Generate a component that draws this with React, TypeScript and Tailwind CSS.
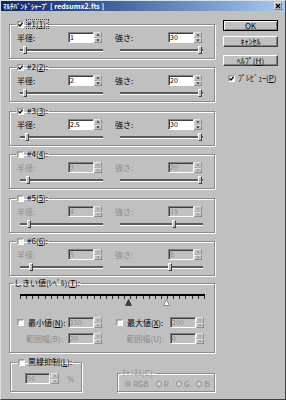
import React from "react";

type Band = {
	n: number;
	on: boolean;
	r: string;
	s: string;
	rx: number;
	sx: number;
	dis: boolean;
	focus?: boolean;
};

const bands: Band[] = [
	{ n: 1, on: true, r: "1", s: "30", rx: 3, sx: 78, dis: false, focus: true },
	{ n: 2, on: true, r: "2", s: "20", rx: 3, sx: 78, dis: false },
	{ n: 3, on: true, r: "2.5", s: "30", rx: 5, sx: 78, dis: false },
	{ n: 4, on: false, r: "3", s: "20", rx: 6, sx: 78, dis: true },
	{ n: 5, on: false, r: "4", s: "15", rx: 7, sx: 52, dis: true },
	{ n: 6, on: false, r: "5", s: "8", rx: 9, sx: 48, dis: true },
];

const gaps = ["", "mt-[4px]", "mt-[5px]", "mt-[4px]", "mt-[5px]", "mt-[4px]"];

const grey = "text-[#8c8c8c]";
const frame =
	"border border-[#8a8a8a] shadow-[inset_1px_1px_0_#fff,1px_1px_0_#fff]";

const Check = ({ on }: { on?: boolean }) => (
	<svg width="7" height="7" viewBox="0 0 7 7" className="shrink-0">
		<rect width="7" height="7" fill="#fff" />
		<path d="M0 7V0h7" fill="none" stroke="#808080" strokeWidth="1" />
		<path d="M1 6V1h5" fill="none" stroke="#404040" strokeWidth="0.6" />
		{on && (
			<path
				d="M1.6 3.4 L3 4.9 L5.6 1.8"
				fill="none"
				stroke="#000"
				strokeWidth="1.3"
			/>
		)}
	</svg>
);

const Spin = ({ dis }: { dis?: boolean }) => {
	const c = dis ? "#8c8c8c" : "#000";
	return (
		<svg width="8" height="11" viewBox="0 0 8 11" className="shrink-0">
			<rect width="8" height="11" fill="#c0c0c0" />
			<path d="M0 5V0h8" fill="none" stroke="#fff" />
			<path d="M8 0v5.5H0" fill="none" stroke="#606060" />
			<path d="M0 11V6h8" fill="none" stroke="#fff" />
			<path d="M8 6v5H0" fill="none" stroke="#606060" />
			<path d="M2.5 3.6h3L4 2z" fill={c} />
			<path d="M2.5 7.6h3L4 9.2z" fill={c} />
		</svg>
	);
};

const Field = ({ v, dis, w = "w-[26px]" }: { v: string; dis?: boolean; w?: string }) => (
	<span
		className={`flex h-[11px] ${w} shrink-0 items-center border border-t-[#808080] border-l-[#808080] border-r-white border-b-white pl-[1px] text-[7px] shadow-[inset_1px_1px_0_#404040] ${
			dis ? `bg-[#c0c0c0] ${grey}` : "bg-white"
		}`}
	>
		{v}
	</span>
);

const Track = ({ x }: { x: number }) => (
	<div className="relative flex h-[8px] w-[83px] items-center">
		<div className="h-[2px] w-full bg-[#5a5a5a] shadow-[0_1px_0_#fff]" />
		<div
			className="absolute top-0 h-[8px] w-[4px] border border-t-white border-l-white border-r-[#404040] border-b-[#404040] bg-[#c0c0c0]"
			style={{ left: x }}
		/>
	</div>
);

const Btn = ({ children, def, cls = "" }: { children: React.ReactNode; def?: boolean; cls?: string }) => (
	<button
		type="button"
		className={`flex h-[11px] w-[55px] items-center justify-center bg-[#c0c0c0] ${
			def
				? "border border-black shadow-[inset_1px_1px_0_#fff,inset_-1px_-1px_0_#808080]"
				: "border border-t-white border-l-white border-r-[#404040] border-b-[#404040] shadow-[inset_-1px_-1px_0_#808080]"
		} ${cls}`}
	>
		{children}
	</button>
);

const Radio = ({ on, label }: { on?: boolean; label: string }) => (
	<span className={`flex items-center gap-[2px] ${grey}`}>
		<svg width="6" height="6" viewBox="0 0 6 6">
			<circle cx="3" cy="3" r="2.6" fill="#d4d4d4" stroke="#808080" strokeWidth="0.8" />
			{on && <circle cx="3" cy="3" r="1.1" fill="#6a6a6a" />}
		</svg>
		{label}
	</span>
);

const BandGroup = ({ b, cls }: { b: Band; cls: string }) => (
	<fieldset className={`h-[39px] ${frame} ${cls}`}>
		<legend className="ml-[6px] flex h-[8px] items-center gap-[3px] px-[1px]">
			<Check on={b.on} />
			<span className={b.focus ? "outline outline-1 outline-dotted outline-[#404040]" : ""}>
				#{b.n}(<span className="underline">{b.n}</span>):
			</span>
		</legend>
		<div className={`mt-[4px] flex h-[11px] items-center pl-[7px] ${b.dis ? grey : ""}`}>
			<span className="w-[51px]">半径:</span>
			<Field v={b.r} dis={b.dis} />
			<Spin dis={b.dis} />
			<span className="ml-[13px] w-[53px]">強さ:</span>
			<Field v={b.s} dis={b.dis} />
			<Spin dis={b.dis} />
		</div>
		<div className="mt-[3px] flex h-[8px] items-center gap-[17px] pl-[10px]">
			<Track x={b.rx} />
			<Track x={b.sx} />
		</div>
	</fieldset>
);

export default function App() {
	const ticks = Array.from({ length: 31 });
	return (
		<div className="flex h-[400px] w-[286px] flex-col border border-t-[#dfdfdf] border-l-[#dfdfdf] border-r-[#404040] border-b-[#404040] bg-[#c0c0c0] font-['Noto_Sans_CJK_JP','Noto_Sans',sans-serif] text-[8px] leading-none text-black">
			{/* title bar */}
			<div className="flex h-[10px] shrink-0 items-center justify-between bg-linear-to-r from-[#0a246a] to-[#a6caf0] pl-[2px] pr-[3px] text-[7px] font-bold text-white">
				<span>ﾏﾙﾁﾊﾞﾝﾄﾞｼｬｰﾌﾟ [ redsumx2.fts ]</span>
				<svg width="8" height="8" viewBox="0 0 8 8">
					<rect width="8" height="8" fill="#c0c0c0" />
					<path d="M0 8V0h8" fill="none" stroke="#fff" />
					<path d="M8 0v8H0" fill="none" stroke="#404040" />
					<path d="M2 2l4 4M6 2l-4 4" stroke="#000" strokeWidth="1.2" />
				</svg>
			</div>

			<div className="flex">
				{/* left column */}
				<div className="flex w-[214px] flex-col pl-[8px] pt-[9px]">
					{bands.map((b, i) => (
						<BandGroup key={b.n} b={b} cls={gaps[i]} />
					))}

					{/* threshold */}
					<fieldset className={`mt-[3px] h-[74px] ${frame}`}>
						<legend className="ml-[3px] flex h-[8px] items-center px-[1px]">
							しきい値(ﾚﾍﾞﾙ)(<span className="underline">T</span>):
						</legend>
						<div className="relative mt-[7px] ml-[10px] w-[185px]">
							<div className="h-[2px] w-full bg-black" />
							<div className="flex h-[3px] justify-between">
								{ticks.map((_, i) => (
									<span key={i} className="h-full w-px bg-[#303030]" />
								))}
							</div>
							<div className="h-[7px]" />
							<svg width="7" height="7" viewBox="0 0 7 7" className="absolute left-[105px] top-[5px]">
								<path d="M3.5 0.5L6.5 6.5H0.5z" fill="#404040" stroke="#202020" strokeWidth="0.6" />
							</svg>
							<svg width="7" height="7" viewBox="0 0 7 7" className="absolute left-[143px] top-[5px]">
								<path d="M3.5 0.5L6.5 6.5H0.5z" fill="#fff" stroke="#707070" strokeWidth="0.8" />
							</svg>
						</div>
						<div className="mt-[11px] flex h-[11px] items-center pl-[7px]">
							<Check />
							<span className="ml-[4px] w-[40px] whitespace-nowrap">
								最小値(<span className="underline">N</span>):
							</span>
							<Field v="150" dis />
							<Spin dis />
							<span className="ml-[14px]">
								<Check />
							</span>
							<span className="ml-[4px] w-[43px] whitespace-nowrap">
								最大値(<span className="underline">X</span>):
							</span>
							<Field v="200" dis />
							<Spin dis />
						</div>
						<div className={`mt-[5px] flex h-[11px] items-center pl-[7px] ${grey}`}>
							<span className="w-[51px] whitespace-nowrap pr-[5px] text-right">範囲幅(B):</span>
							<Field v="20" dis />
							<Spin dis />
							<span className="ml-[14px] w-[54px] whitespace-nowrap pr-[6px] text-right">範囲幅(U):</span>
							<Field v="0" dis />
							<Spin dis />
						</div>
					</fieldset>

					{/* bottom groups */}
					<div className="mt-[5px] flex items-end">
						<fieldset className={`ml-[1px] h-[34px] w-[72px] ${frame}`}>
							<legend className="ml-[6px] flex h-[8px] items-center gap-[3px] whitespace-nowrap px-[1px]">
								<Check />
								<span>
									黒縁抑制(<span className="underline">L</span>):
								</span>
							</legend>
							<div className={`mt-[7px] flex h-[11px] items-center pl-[14px] ${grey}`}>
								<Field v="50" dis w="w-[25px]" />
								<span className="ml-[1px]">
									<Spin dis />
								</span>
								<span className="ml-[8px]">%</span>
							</div>
						</fieldset>
						<fieldset className={`ml-[35px] h-[23px] w-[98px] ${frame}`}>
							<legend className={`ml-[3px] flex h-[8px] items-center px-[1px] ${grey}`}>
								ﾁｬﾝﾈﾙ(C):
							</legend>
							<div className="mt-[3px] flex h-[7px] items-center gap-[7px] pl-[7px]">
								<Radio on label="RGB" />
								<Radio label="R" />
								<Radio label="G" />
								<Radio label="B" />
							</div>
						</fieldset>
					</div>
				</div>

				{/* right column */}
				<div className="ml-[8px] flex w-[55px] flex-col pt-[9px]">
					<Btn def>OK</Btn>
					<Btn cls="mt-[5px]">ｷｬﾝｾﾙ</Btn>
					<Btn cls="mt-[8px]">
						ﾍﾙﾌﾟ(<span className="underline">H</span>)
					</Btn>
					<label className="mt-[8px] ml-[5px] flex items-center gap-[3px]">
						<Check on />
						<span>
							ﾌﾟﾚﾋﾞｭｰ(<span className="underline">P</span>)
						</span>
					</label>
				</div>
			</div>
		</div>
	);
}
